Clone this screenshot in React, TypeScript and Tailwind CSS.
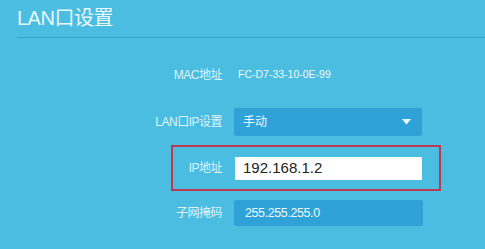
export default function App() {
  const font = { fontFamily: '"Liberation Sans", "Noto Sans CJK SC", sans-serif' };
  return (
    <div className="w-[485px] h-[249px] overflow-hidden bg-[#4bbde0]" style={font}>
      <div className="pt-[4px] pl-[17px]">
        <div className="text-[20px] leading-[28px] text-[#e9f8fd] tracking-[-0.5px]">LAN口设置</div>
        <div className="mt-[5px] h-px bg-[#35a3cf]" />
      </div>

      <div className="flex flex-col">
        <div className="mt-[27px] flex items-center h-[20px]">
          <div className="w-[222px] text-right text-[12px] text-[#dff3fa] tracking-[-0.5px]">MAC地址</div>
          <div className="ml-[16px] text-[10.5px] text-[#eef9fd]">FC-D7-33-10-0E-99</div>
        </div>

        <div className="mt-[23px] flex items-center h-[28px]">
          <div className="w-[222px] text-right text-[12px] text-[#dff3fa] tracking-[-0.5px]">LAN口IP设置</div>
          <div className="ml-[12px] w-[188px] h-full flex items-center justify-between rounded-[2px] bg-[#2fa2d8] pl-[9px] pr-[11px]">
            <span className="text-[12px] text-[#eef9fd]">手动</span>
            <svg width="9" height="6" viewBox="0 0 9 6"><path d="M0 0h9L4.5 5.5z" fill="#eef9fd" /></svg>
          </div>
        </div>

        <div className="mt-[9px] ml-[171px] w-[270px] h-[46px] flex items-center border-2 border-[#c0384c]">
          <div className="w-[49px] text-right text-[12px] text-[#dff3fa] tracking-[-0.5px]">IP地址</div>
          <div className="ml-[13px] w-[187px] h-[23px] flex items-center bg-white rounded-[1px] pl-[8px]">
            <span className="text-[15px] text-[#222]">192.168.1.2</span>
          </div>
        </div>

        <div className="mt-[9px] flex items-center h-[26px]">
          <div className="w-[222px] text-right text-[12px] text-[#dff3fa] tracking-[-0.5px]">子网掩码</div>
          <div className="ml-[12px] w-[189px] h-full flex items-center rounded-[2px] bg-[#2fa2d8] pl-[11px]">
            <span className="text-[12.5px] text-[#eef9fd] tracking-[-0.4px]">255.255.255.0</span>
          </div>
        </div>
      </div>
    </div>
  );
}
